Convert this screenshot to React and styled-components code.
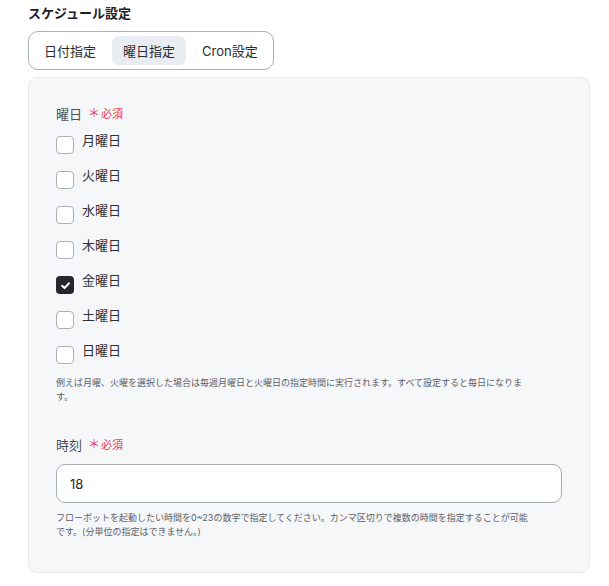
import React, { useState } from 'react'
import styled, { createGlobalStyle } from 'styled-components'

const GlobalStyle = createGlobalStyle`
  body {
    margin: 0;
    background: #ffffff;
    font-family: Inter, "Noto Sans CJK JP", sans-serif;
  }
`

const Page = styled.div`
  padding: 4px 19px 0 28px;
  width: 562px;
`

const Title = styled.div`
  font-size: 13px;
  font-weight: 600;
  line-height: 18px;
  color: #1d2127;
  margin-bottom: 9px;
`

const Tabs = styled.div`
  display: inline-flex;
  gap: 5px;
  padding: 4px;
  border: 1px solid #a9b0b9;
  border-radius: 10px;
  background: #fff;
`

const Tab = styled.button`
  border: none;
  background: ${({ active }) => (active ? '#e9ecf0' : 'transparent')};
  border-radius: 7px;
  height: 29px;
  padding: 0 11px;
  font-family: inherit;
  font-size: 13px;
  color: #2a2e34;
  cursor: pointer;
`

const Panel = styled.div`
  margin-top: 7px;
  background: #f6f7f9;
  border: 1px solid #e7e9ec;
  border-radius: 9px;
  padding: 27px 27px 33px;
`

const FieldLabel = styled.div`
  display: flex;
  align-items: center;
  gap: 6px;
  font-size: 13px;
  line-height: 18px;
  color: #4a4f57;
  margin-top: ${({ spaced }) => (spaced ? '32px' : '0')};
`

const Required = styled.span`
  font-size: 11px;
  color: #e8335f;
  display: inline-flex;
  align-items: center;
  gap: 1px;

  &::before {
    content: '＊';
    font-size: 12px;
    line-height: 1;
  }
`

const DayList = styled.div`
  display: flex;
  flex-direction: column;
  gap: 11px;
  margin-top: 7px;
`

const DayRow = styled.label`
  display: flex;
  align-items: flex-start;
  gap: 8px;
  height: 24px;
  cursor: pointer;
`

const Box = styled.span`
  box-sizing: border-box;
  width: 18px;
  height: 18px;
  margin-top: 6px;
  border-radius: 4px;
  border: ${({ checked }) => (checked ? 'none' : '1px solid #a9b0ba')};
  background: ${({ checked }) => (checked ? '#23262d' : '#fff')};
  display: flex;
  align-items: center;
  justify-content: center;
`

const DayText = styled.span`
  font-size: 13px;
  line-height: 20px;
  color: #2e3238;
`

const Help = styled.p`
  margin: ${({ top }) => top} 0 0;
  max-width: 472px;
  font-size: 9px;
  line-height: 14px;
  color: #5b6068;
`

const Input = styled.input`
  box-sizing: border-box;
  display: block;
  width: 100%;
  height: 39px;
  margin-top: 10px;
  padding: 0 13px;
  border: 1px solid #a6aeb8;
  border-radius: 9px;
  background: #fff;
  font-family: inherit;
  font-size: 13px;
  color: #1f2328;
  outline: none;
`

const days = ['月曜日', '火曜日', '水曜日', '木曜日', '金曜日', '土曜日', '日曜日']

const Check = () => (
  <svg width="11" height="11" viewBox="0 0 12 12">
    <path d="M2.3 6.3 L4.9 8.8 L9.8 3.6" fill="none" stroke="#fff" strokeWidth="2.2" strokeLinecap="round" strokeLinejoin="round" />
  </svg>
)

export default function App() {
  const [tab, setTab] = useState('weekday')
  const [selected, setSelected] = useState(['金曜日'])
  const [hour, setHour] = useState('18')

  const toggle = (d) =>
    setSelected((s) => (s.includes(d) ? s.filter((x) => x !== d) : [...s, d]))

  return (
    <Page>
      <GlobalStyle />
      <Title>スケジュール設定</Title>
      <Tabs>
        <Tab active={tab === 'date'} onClick={() => setTab('date')}>日付指定</Tab>
        <Tab active={tab === 'weekday'} onClick={() => setTab('weekday')}>曜日指定</Tab>
        <Tab active={tab === 'cron'} onClick={() => setTab('cron')}>Cron設定</Tab>
      </Tabs>
      <Panel>
        <FieldLabel>
          曜日 <Required>必須</Required>
        </FieldLabel>
        <DayList>
          {days.map((d) => (
            <DayRow key={d} onClick={() => toggle(d)}>
              <Box checked={selected.includes(d)}>{selected.includes(d) && <Check />}</Box>
              <DayText>{d}</DayText>
            </DayRow>
          ))}
        </DayList>
        <Help top="12px">
          例えば月曜、火曜を選択した場合は毎週月曜日と火曜日の指定時間に実行されます。すべて設定すると毎日になります。
        </Help>
        <FieldLabel spaced>
          時刻 <Required>必須</Required>
        </FieldLabel>
        <Input value={hour} onChange={(e) => setHour(e.target.value)} />
        <Help top="8px">
          フローボットを起動したい時間を0~23の数字で指定してください。カンマ区切りで複数の時間を指定することが可能です。(分単位の指定はできません。)
        </Help>
      </Panel>
    </Page>
  )
}
